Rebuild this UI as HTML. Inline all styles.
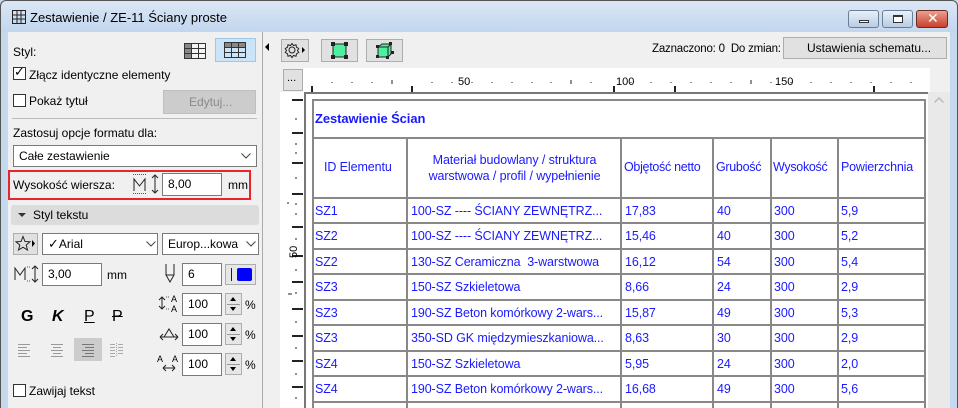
<!DOCTYPE html>
<html><head><meta charset="utf-8"><style>
*{margin:0;padding:0;box-sizing:border-box}
body{width:958px;height:408px;overflow:hidden;font-family:"Liberation Sans","DejaVu Sans",sans-serif;font-size:12px;color:#000;position:relative;background:#c8daf0}
.a{position:absolute}
.t{position:absolute;white-space:nowrap}
.cb{position:absolute;width:13px;height:13px;border:1px solid #333;background:#fff}
.in{position:absolute;background:#fff;border:1px solid #7a7a7a;padding-left:5px;line-height:20px;font-size:12px}
.btn{position:absolute;background:#e1e1e1;border:1px solid #adadad}
.sp{position:absolute;width:17px;height:22px;border:1px solid #adadad;background:#e6e6e6}
.sp:before{content:"";position:absolute;left:4px;top:3px;border:3px solid transparent;border-bottom:4px solid #000;border-top:0}
.sp:after{content:"";position:absolute;left:4px;top:13px;border:3px solid transparent;border-top:4px solid #000;border-bottom:0}
.sp i{position:absolute;left:1px;right:1px;top:10px;height:1px;background:#999}
.tb{position:absolute;color:#1a1aff;font-size:12.5px;white-space:nowrap;letter-spacing:-.1px}
.hl{position:absolute;height:2px;background:#888;left:312px;width:614px}
.vl{position:absolute;width:2px;background:#888;top:138px;height:270px}
</style></head><body>
<div class="a" style="left:0;top:0;width:958px;height:32px;background:linear-gradient(#dbe7f5,#c2d6ee);border-top:1px solid #555;border-left:1px solid #555;border-right:1px solid #555;border-radius:6px 6px 0 0"></div>
<svg class="a" style="left:12px;top:10px" width="14" height="14"><rect x="0.5" y="0.5" width="13" height="13" fill="none" stroke="#222"/><path d="M0 5H14M0 9H14M5 0V14M9 0V14" stroke="#222"/></svg>
<div class="t" style="left:30px;top:10px;font-size:13px">Zestawienie / ZE-11 Ściany proste</div>
<div class="a" style="left:848px;top:10px;width:31px;height:18px;border:1px solid #6a7e96;border-radius:3px;background:linear-gradient(#e8f0f8,#b8cce4)"><div class="a" style="left:10px;top:9px;width:10px;height:3px;border:1px solid #333;background:#fff"></div></div>
<div class="a" style="left:882px;top:10px;width:31px;height:18px;border:1px solid #6a7e96;border-radius:3px;background:linear-gradient(#e8f0f8,#b8cce4)"><div class="a" style="left:10px;top:4px;width:10px;height:8px;border:1px solid #333;border-top-width:2px;background:#fff"></div></div>
<div class="a" style="left:916px;top:10px;width:32px;height:18px;border:1px solid #6b2a20;border-radius:3px;background:linear-gradient(#e9a090,#c8402c)"><div class="t" style="left:10px;top:-1px;color:#fff;font-weight:bold;font-size:14px">✕</div></div>
<div class="a" style="left:8px;top:32px;width:942px;height:376px;background:#f0f0f0"></div>
<div class="a" style="left:262px;top:32px;width:1px;height:376px;background:#aaa"></div>
<div class="a" style="left:265px;top:43px;border:4px solid transparent;border-right:4px solid #000;border-left:0"></div>
<div class="t" style="left:13px;top:45px">Styl:</div>
<svg class="a" style="left:184px;top:43px" width="22" height="16"><rect x="0.5" y="0.5" width="21" height="15" fill="#f4f4f4" stroke="#333"/><rect x="1" y="1" width="6" height="14" fill="#888"/><path d="M0 5.5H22M0 10.5H22M7.5 0V16M14.5 0V16" stroke="#333"/></svg>
<div class="a" style="left:215px;top:38px;width:41px;height:24px;background:#cce4f7;border:1px solid #99c9ef"></div>
<svg class="a" style="left:224px;top:42px" width="22" height="16"><rect x="0.5" y="0.5" width="21" height="15" fill="#cce4f7" stroke="#333"/><rect x="1" y="1" width="20" height="4" fill="#888"/><path d="M0 5.5H22M0 10.5H22M7.5 0V16M14.5 0V16" stroke="#333"/></svg>
<div class="cb" style="left:13px;top:67px"></div><div class="t" style="left:14px;top:64px;font-size:13px">✓</div>
<div class="t" style="left:29px;top:68px">Złącz identyczne elementy</div>
<div class="cb" style="left:13px;top:94px"></div>
<div class="t" style="left:29px;top:94px">Pokaż tytuł</div>
<div class="a" style="left:163px;top:90px;width:93px;height:24px;background:#cccccc;border:1px solid #bfbfbf"></div>
<div class="t" style="left:189px;top:95px;color:#8a8a8a">Edytuj...</div>
<div class="a" style="left:12px;top:118px;width:245px;height:1px;background:#bbb"></div>
<div class="t" style="left:13px;top:126px">Zastosuj opcje formatu dla:</div>
<div class="in" style="left:13px;top:145px;width:244px;height:22px">Całe zestawienie</div>
<svg class="a" style="left:241px;top:153px" width="10" height="6"><path d="M0.5 0.5L5 5 9.5 0.5" fill="none" stroke="#444"/></svg>
<div class="a" style="left:8px;top:170px;width:243px;height:30px;border:2px solid #e8262a"></div>
<div class="t" style="left:13px;top:178px">Wysokość wiersza:</div>
<svg class="a" style="left:132px;top:174px" width="28" height="20"><path d="M1 0.5H14M1 19.5H14" stroke="#555" stroke-dasharray="1 1"/><path d="M2 17V5L7.5 12 13 5V17" fill="none" stroke="#222"/><path d="M23 1V19M20 4L23 1 26 4M20 16L23 19 26 16" fill="none" stroke="#222"/></svg>
<div class="in" style="left:162px;top:173px;width:60px;height:23px">8,00</div>
<div class="t" style="left:228px;top:178px">mm</div>
<div class="a" style="left:11px;top:205px;width:248px;height:20px;background:#dcdcdc;border-radius:3px"></div>
<div class="a" style="left:18px;top:213px;border:4px solid transparent;border-top:4px solid #333;border-bottom:0"></div>
<div class="t" style="left:33px;top:208px">Styl tekstu</div>
<div class="btn" style="left:13px;top:233px;width:25px;height:22px"></div>
<svg class="a" style="left:15px;top:235px" width="22" height="17"><path d="M8 1.5L10 6.5 15 6.8 11.2 10 12.5 15 8 12.2 3.5 15 4.8 10 1 6.8 6 6.5Z" fill="none" stroke="#222"/><path d="M17 5L20 8.5 17 12Z" fill="#000"/></svg>
<div class="in" style="left:42px;top:233px;width:116px;height:22px"><span style="font-size:13px">✓</span>Arial</div>
<svg class="a" style="left:146px;top:241px" width="10" height="6"><path d="M0.5 0.5L5 5 9.5 0.5" fill="none" stroke="#444"/></svg>
<div class="in" style="left:162px;top:233px;width:97px;height:22px">Europ...kowa</div>
<svg class="a" style="left:246px;top:241px" width="10" height="6"><path d="M0.5 0.5L5 5 9.5 0.5" fill="none" stroke="#444"/></svg>
<svg class="a" style="left:14px;top:265px" width="26" height="18"><path d="M1 15V3L6 10 11 3V15" fill="none" stroke="#222"/><path d="M13 2H16M13 16H16" stroke="#555" stroke-dasharray="1 1"/><path d="M21 1V17M18 4L21 1 24 4M18 14L21 17 24 14" fill="none" stroke="#222"/></svg>
<div class="in" style="left:42px;top:263px;width:60px;height:23px">3,00</div>
<div class="t" style="left:107px;top:268px">mm</div>
<svg class="a" style="left:164px;top:264px" width="12" height="20"><path d="M2 0V11L6 18 10 11V0M2 11H10" fill="none" stroke="#222"/></svg>
<div class="in" style="left:182px;top:263px;width:40px;height:23px">6</div>
<div class="btn" style="left:225px;top:264px;width:31px;height:21px;background:#e6e6e6"></div>
<div class="a" style="left:231px;top:268px;width:1px;height:13px;background:#00f"></div>
<div class="a" style="left:237px;top:268px;width:15px;height:13px;background:#0000ff;border-radius:2px"></div>
<svg class="a" style="left:158px;top:293px" width="22" height="20"><path d="M4 4V16M1 7L4 4 7 7M1 13L4 16 7 13" fill="none" stroke="#222"/><path d="M8 4H12M8 16H12" stroke="#555" stroke-dasharray="1 1"/><text x="13" y="9" font-size="9" font-family="Liberation Sans">A</text><text x="13" y="19" font-size="9" font-family="Liberation Sans">A</text></svg>
<div class="in" style="left:182px;top:293px;width:40px;height:23px">100</div>
<div class="sp" style="left:225px;top:293px"><i></i></div><div class="t" style="left:245px;top:298px">%</div>
<svg class="a" style="left:158px;top:324px" width="22" height="18"><path d="M2 13H20M6 13L11 5 16 13M2 13L5 10M2 13L5 16M20 13L17 10M20 13L17 16" fill="none" stroke="#222"/></svg>
<div class="in" style="left:182px;top:323px;width:40px;height:23px">100</div>
<div class="sp" style="left:225px;top:323px"><i></i></div><div class="t" style="left:245px;top:328px">%</div>
<svg class="a" style="left:157px;top:352px" width="24" height="20"><text x="0" y="10" font-size="9" font-family="Liberation Sans">A</text><text x="15" y="10" font-size="9" font-family="Liberation Sans">A</text><path d="M6 16H18M6 16L9 13M6 16L9 19M18 16L15 13M18 16L15 19" fill="none" stroke="#222"/></svg>
<div class="in" style="left:182px;top:353px;width:40px;height:23px">100</div>
<div class="sp" style="left:225px;top:353px"><i></i></div><div class="t" style="left:245px;top:358px">%</div>
<div class="t" style="left:21px;top:308px;font-size:16px;font-weight:bold">G</div>
<div class="t" style="left:52px;top:308px;font-size:16px;font-weight:bold;font-style:italic">K</div>
<div class="t" style="left:84px;top:308px;font-size:16px;text-decoration:underline">P</div>
<div class="t" style="left:112px;top:308px;font-size:16px;text-decoration:line-through">P</div>
<svg class="a" style="left:18px;top:343px" width="14" height="14"><path d="M0 1.5H12M0 4.5H9M0 7.5H12M0 10.5H9M0 13.5H12" stroke="#999"/></svg>
<svg class="a" style="left:50px;top:343px" width="14" height="14"><path d="M1 1.5H13M3 4.5H11M1 7.5H13M3 10.5H11M1 13.5H13" stroke="#999"/></svg>
<div class="a" style="left:74px;top:338px;width:28px;height:23px;background:#cccccc"></div>
<svg class="a" style="left:81px;top:343px" width="14" height="14"><path d="M1 1.5H13M4 4.5H13M1 7.5H13M4 10.5H13M1 13.5H13" stroke="#777"/></svg>
<svg class="a" style="left:110px;top:343px" width="14" height="14"><path d="M0 1.5H5M0 4.5H5M0 7.5H5M0 10.5H5M0 13.5H5M8 1.5H13M8 4.5H13M8 7.5H13M8 10.5H13" stroke="#aaa"/><path d="M6.5 0V14" stroke="#aaa" stroke-dasharray="1 1"/></svg>
<div class="cb" style="left:13px;top:384px"></div>
<div class="t" style="left:29px;top:384px">Zawijaj tekst</div>
<div class="btn" style="left:281px;top:39px;width:28px;height:23px"></div>
<svg class="a" style="left:283px;top:41px" width="24" height="18"><circle cx="9" cy="9" r="3" fill="none" stroke="#222"/><path d="M9 2.5L10.5 4.5 13 3.8 13.5 6.2 15.7 7.5 14.5 9.5 15.7 11.5 13.5 12.8 13 15.2 10.5 14.5 9 16.5 7.5 14.5 5 15.2 4.5 12.8 2.3 11.5 3.5 9.5 2.3 7.5 4.5 6.2 5 3.8 7.5 4.5Z" fill="none" stroke="#222"/><path d="M19 6L22 9 19 12Z"/></svg>
<div class="btn" style="left:321px;top:39px;width:37px;height:23px"></div>
<svg class="a" style="left:331px;top:42px" width="18" height="17"><rect x="2" y="2" width="13" height="13" fill="#4ef0a0" stroke="#222"/><rect x="0" y="0" width="4" height="4" fill="#222"/><rect x="13" y="0" width="4" height="4" fill="#222"/><rect x="0" y="13" width="4" height="4" fill="#222"/><rect x="13" y="13" width="4" height="4" fill="#222"/></svg>
<div class="btn" style="left:366px;top:39px;width:37px;height:23px"></div>
<svg class="a" style="left:376px;top:42px" width="18" height="17"><path d="M2 5L6 2H15V12L12 15H2Z" fill="#4ef0a0" stroke="#222"/><path d="M2 5H12V15M12 5L15 2" fill="none" stroke="#222"/><rect x="0" y="3" width="3" height="3" fill="#222"/><rect x="13" y="0" width="3" height="3" fill="#222"/><rect x="0" y="13" width="3" height="3" fill="#222"/><rect x="10" y="14" width="3" height="3" fill="#222"/><rect x="15" y="9" width="3" height="3" fill="#222"/></svg>
<div class="t" style="left:652px;top:43px;font-size:11.5px;letter-spacing:-.2px">Zaznaczono: 0&nbsp; Do zmian: 0</div>
<div class="btn" style="left:783px;top:37px;width:164px;height:22px"></div>
<div class="t" style="left:807px;top:41px">Ustawienia schematu...</div>
<div class="btn" style="left:283px;top:69px;width:20px;height:22px"></div>
<div class="t" style="left:287px;top:72px;font-size:11px">...</div>
<div class="a" style="left:303px;top:68px;width:627px;height:24px;background:#fff"></div>
<div class="a" style="left:280px;top:92px;width:25px;height:316px;background:#fff"></div>
<svg class="a" style="left:303px;top:68px" width="627" height="24">
<g stroke="#222">
<path d="M9 18V24M109 18V24M311 18V24M372 18V24M571 18V24M751 18V24" stroke-width="2"/>
<path d="M89 12V16M268 12V16M448 12V16M628 12V16" stroke-width="1"/>
<path d="M29 14V15M49 14V15M69 14V15M129 14V15M149 14V15M169 14V15M189 14V15M209 14V15M229 14V15M248 14V15M288 14V15M328 14V15M348 14V15M368 14V15M388 14V15M408 14V15M428 14V15M468 14V15M488 14V15M508 14V15M528 14V15M548 14V15M568 14V15M588 14V15M608 14V15M648 14V15M668 14V15M688 14V15M708 14V15M728 14V15M748 14V15"/>
</g>
<text x="155" y="17" font-size="11" font-family="Liberation Sans">50</text>
<text x="313" y="17" font-size="11" font-family="Liberation Sans">100</text>
<text x="472" y="17" font-size="11" font-family="Liberation Sans">150</text>
</svg>
<svg class="a" style="left:280px;top:92px" width="25" height="316">
<g stroke="#222">
<path d="M12 8H23M12 41H23M12 71H23M12 102H23M12 135H23M12 164H23M12 190H23M12 217H23M12 244H23M12 269H23M12 295H23" stroke-width="2"/>
<path d="M15 27H17M15 52H17M15 61H17M15 86H17M15 112H17M15 122H17M15 147H17M15 178H17M15 201H17M15 230H17M15 256H17M15 282H17M15 306H17"/>
<path d="M8 110V112M8 202H12"/>
</g>
<text x="17" y="166" font-size="11" font-family="Liberation Sans" transform="rotate(-90 17 166)">50</text>
</svg>
<div class="a" style="left:305px;top:92px;width:623px;height:316px;background:#fff"></div>
<div class="a" style="left:304px;top:92px;width:2px;height:316px;background:#777"></div>
<div class="a" style="left:304px;top:92px;width:624px;height:2px;background:#777"></div>
<div class="a" style="left:312px;top:99px;width:614px;height:309px;border:2px solid #888;border-bottom:0"></div>
<div class="hl" style="top:137px"></div>
<div class="hl" style="top:197px"></div>
<div class="hl" style="top:222px"></div>
<div class="hl" style="top:248px"></div>
<div class="hl" style="top:273px"></div>
<div class="hl" style="top:299px"></div>
<div class="hl" style="top:324px"></div>
<div class="hl" style="top:350px"></div>
<div class="hl" style="top:375px"></div>
<div class="hl" style="top:401px"></div>
<div class="vl" style="left:406px"></div>
<div class="vl" style="left:620px"></div>
<div class="vl" style="left:712px"></div>
<div class="vl" style="left:770px"></div>
<div class="vl" style="left:837px"></div>
<div class="tb" style="left:315px;top:111px;font-weight:bold;font-size:13px">Zestawienie Ścian</div>
<div class="tb" style="left:324px;top:160px">ID Elementu</div>
<div class="tb" style="left:408px;top:152px;width:213px;text-align:center;line-height:16px;white-space:normal">Materiał budowlany / struktura warstwowa / profil / wypełnienie</div>
<div class="tb" style="left:624px;top:160px;letter-spacing:-.3px">Objętość netto</div>
<div class="tb" style="left:716px;top:160px;letter-spacing:-.3px">Grubość</div>
<div class="tb" style="left:773px;top:160px;letter-spacing:-.3px">Wysokość</div>
<div class="tb" style="left:841px;top:160px;letter-spacing:-.2px">Powierzchnia</div>
<div class="tb" style="left:315px;top:204px">SZ1</div><div class="tb" style="left:411px;top:204px">100-SZ ---- ŚCIANY ZEWNĘTRZ...</div><div class="tb" style="left:625px;top:204px">17,83</div><div class="tb" style="left:717px;top:204px">40</div><div class="tb" style="left:774px;top:204px">300</div><div class="tb" style="left:841px;top:204px">5,9</div>
<div class="tb" style="left:315px;top:229px">SZ2</div><div class="tb" style="left:411px;top:229px">100-SZ ---- ŚCIANY ZEWNĘTRZ...</div><div class="tb" style="left:625px;top:229px">15,46</div><div class="tb" style="left:717px;top:229px">40</div><div class="tb" style="left:774px;top:229px">300</div><div class="tb" style="left:841px;top:229px">5,2</div>
<div class="tb" style="left:315px;top:255px">SZ2</div><div class="tb" style="left:411px;top:255px">130-SZ Ceramiczna&nbsp; 3-warstwowa</div><div class="tb" style="left:625px;top:255px">16,12</div><div class="tb" style="left:717px;top:255px">54</div><div class="tb" style="left:774px;top:255px">300</div><div class="tb" style="left:841px;top:255px">5,4</div>
<div class="tb" style="left:315px;top:280px">SZ3</div><div class="tb" style="left:411px;top:280px">150-SZ Szkieletowa</div><div class="tb" style="left:625px;top:280px">8,66</div><div class="tb" style="left:717px;top:280px">24</div><div class="tb" style="left:774px;top:280px">300</div><div class="tb" style="left:841px;top:280px">2,9</div>
<div class="tb" style="left:315px;top:306px">SZ3</div><div class="tb" style="left:411px;top:306px">190-SZ Beton komórkowy 2-wars...</div><div class="tb" style="left:625px;top:306px">15,87</div><div class="tb" style="left:717px;top:306px">49</div><div class="tb" style="left:774px;top:306px">300</div><div class="tb" style="left:841px;top:306px">5,3</div>
<div class="tb" style="left:315px;top:331px">SZ3</div><div class="tb" style="left:411px;top:331px">350-SD GK międzymieszkaniowa...</div><div class="tb" style="left:625px;top:331px">8,63</div><div class="tb" style="left:717px;top:331px">30</div><div class="tb" style="left:774px;top:331px">300</div><div class="tb" style="left:841px;top:331px">2,9</div>
<div class="tb" style="left:315px;top:357px">SZ4</div><div class="tb" style="left:411px;top:357px">150-SZ Szkieletowa</div><div class="tb" style="left:625px;top:357px">5,95</div><div class="tb" style="left:717px;top:357px">24</div><div class="tb" style="left:774px;top:357px">300</div><div class="tb" style="left:841px;top:357px">2,0</div>
<div class="tb" style="left:315px;top:382px">SZ4</div><div class="tb" style="left:411px;top:382px">190-SZ Beton komórkowy 2-wars...</div><div class="tb" style="left:625px;top:382px">16,68</div><div class="tb" style="left:717px;top:382px">49</div><div class="tb" style="left:774px;top:382px">300</div><div class="tb" style="left:841px;top:382px">5,6</div>
<div class="a" style="left:928px;top:92px;width:22px;height:316px;background:#e9e9e9"></div>
<svg class="a" style="left:934px;top:97px" width="10" height="6"><path d="M0.5 5.5L5 1 9.5 5.5" fill="none" stroke="#bbb" stroke-width="1.5"/></svg>
<div class="a" style="left:950px;top:32px;width:8px;height:376px;background:#c4d8ee;border-right:1px solid #555"></div>
<div class="a" style="left:0;top:32px;width:8px;height:376px;background:#c4d8ee;border-left:1px solid #555"></div>
</body></html>
